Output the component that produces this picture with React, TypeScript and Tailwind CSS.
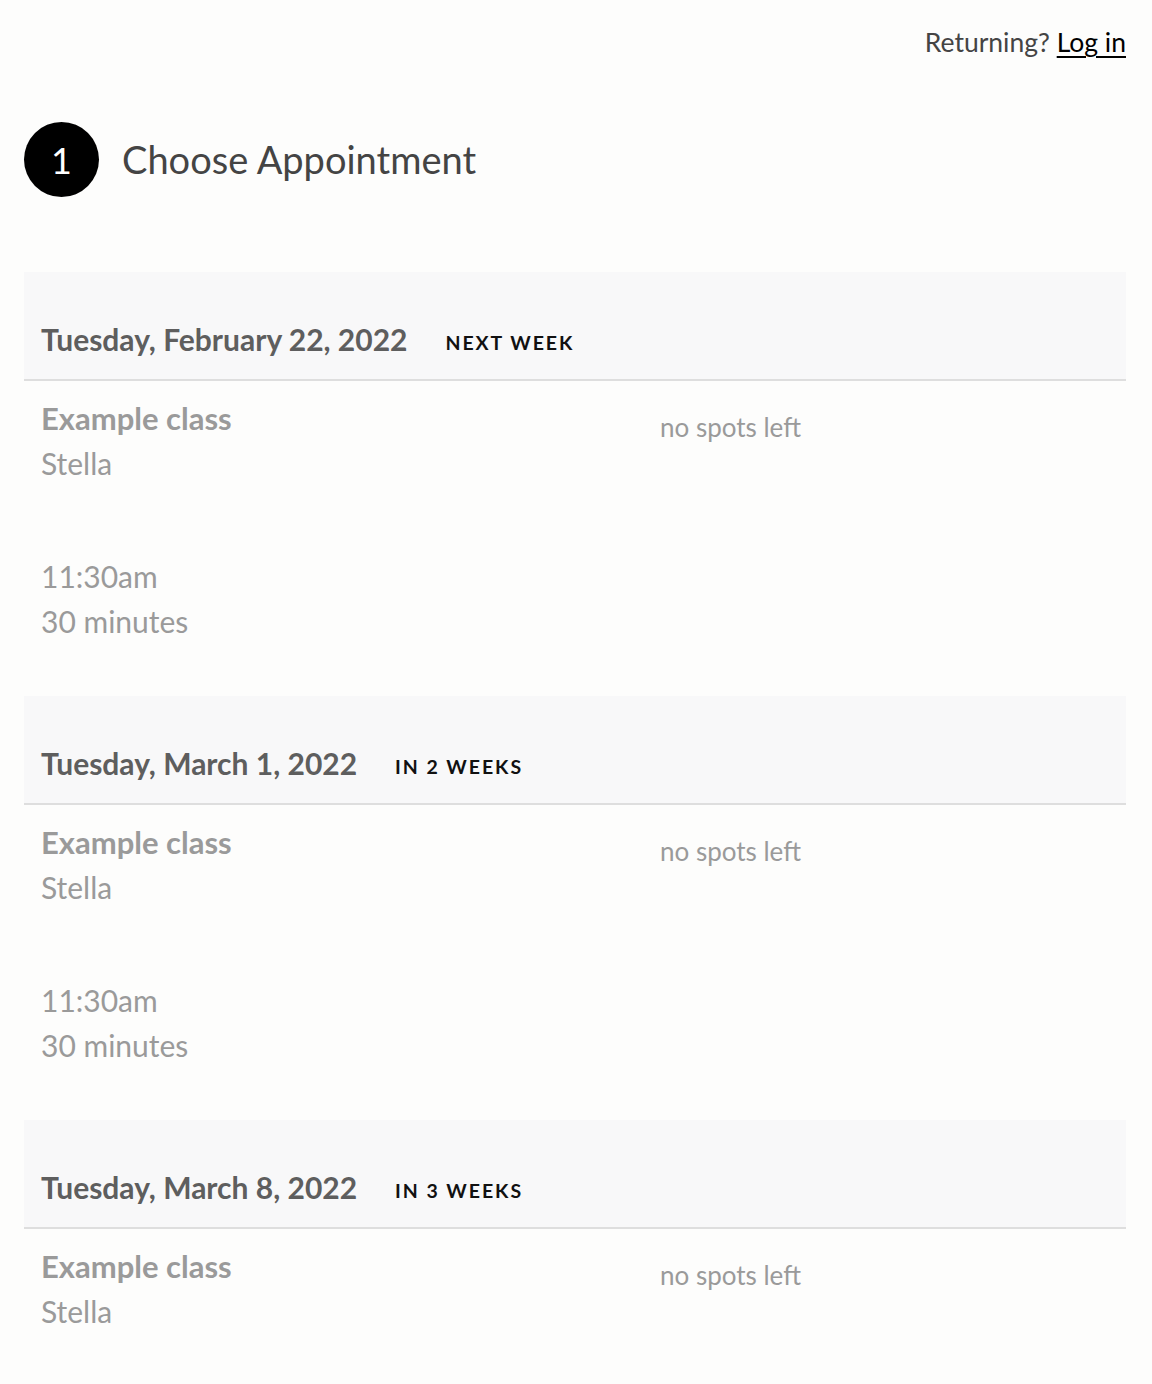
const sans = "font-['Lato','Noto_Sans',sans-serif]";

interface Slot {
  date: string;
  relative: string;
  showTime: boolean;
}

const slots: Slot[] = [
  { date: 'Tuesday, February 22, 2022', relative: 'Next week', showTime: true },
  { date: 'Tuesday, March 1, 2022', relative: 'In 2 weeks', showTime: true },
  { date: 'Tuesday, March 8, 2022', relative: 'In 3 weeks', showTime: false },
];

function DaySection({ slot }: { slot: Slot }) {
  return (
    <section>
      <div className="flex h-[109px] items-end gap-[38px] border-b-2 border-[#dedede] bg-[#f8f8f9] px-[17px] pb-[20px]">
        <h3 className="text-[30px] font-bold leading-[40px] text-[#5e5e5e]">{slot.date}</h3>
        <span className="pb-[7px] text-[19.5px] font-bold uppercase leading-none tracking-[0.1em] text-[#111]">
          {slot.relative}
        </span>
      </div>
      <div className="flex h-[315px] px-[17px]">
        <div className="w-[619px] pt-[15px] text-[30px] leading-[45px] text-[#9a9a9a]">
          <p className="text-[31px] font-bold">Example class</p>
          <p>Stella</p>
          {slot.showTime && (
            <div className="mt-[68px]">
              <p>11:30am</p>
              <p>30 minutes</p>
            </div>
          )}
        </div>
        <p className="pt-[28px] text-[26px] leading-[36px] text-[#9a9a9a]">no spots left</p>
      </div>
    </section>
  );
}

export default function App() {
  return (
    <div className={`min-h-[1384px] bg-[#fdfdfc] px-[24px] pr-[26px] ${sans}`}>
      <div className="flex justify-end pt-[24px] text-[26.5px] leading-[36px] text-[#444]">
        <span>
          Returning?{' '}
          <a href="#" className="text-black underline underline-offset-4">
            Log in
          </a>
        </span>
      </div>

      <div className="mt-[62px] flex items-center gap-[23px]">
        <div className="flex h-[75px] w-[75px] items-center justify-center rounded-full bg-black text-[36px] text-white">
          1
        </div>
        <h2 className="text-[38px] text-[#444]">Choose Appointment</h2>
      </div>

      <div className="mt-[75px]">
        {slots.map((slot) => (
          <DaySection key={slot.date} slot={slot} />
        ))}
      </div>
    </div>
  );
}
